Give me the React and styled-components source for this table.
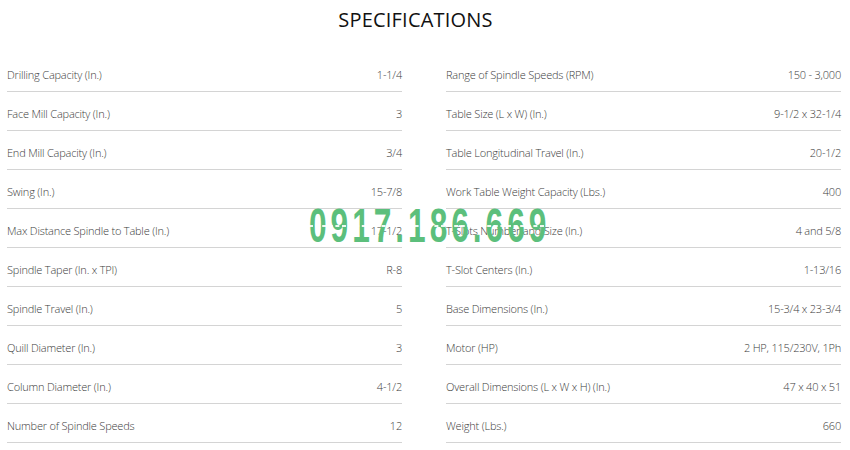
import React from "react";
import styled, { createGlobalStyle } from "styled-components";

const GlobalStyle = createGlobalStyle`
  body {
    margin: 0;
    background: #fff;
    font-family: "Open Sans", "Liberation Sans", sans-serif;
  }
`;

const left = [
  ["Drilling Capacity (In.)", "1-1/4"],
  ["Face Mill Capacity (In.)", "3"],
  ["End Mill Capacity (In.)", "3/4"],
  ["Swing (In.)", "15-7/8"],
  ["Max Distance Spindle to Table (In.)", "17-1/2"],
  ["Spindle Taper (In. x TPI)", "R-8"],
  ["Spindle Travel (In.)", "5"],
  ["Quill Diameter (In.)", "3"],
  ["Column Diameter (In.)", "4-1/2"],
  ["Number of Spindle Speeds", "12"],
];

const right = [
  ["Range of Spindle Speeds (RPM)", "150 - 3,000"],
  ["Table Size (L x W) (In.)", "9-1/2 x 32-1/4"],
  ["Table Longitudinal Travel (In.)", "20-1/2"],
  ["Work Table Weight Capacity (Lbs.)", "400"],
  ["T-Slots Number and Size (In.)", "4 and 5/8"],
  ["T-Slot Centers (In.)", "1-13/16"],
  ["Base Dimensions (In.)", "15-3/4 x 23-3/4"],
  ["Motor (HP)", "2 HP, 115/230V, 1Ph"],
  ["Overall Dimensions (L x W x H) (In.)", "47 x 40 x 51"],
  ["Weight (Lbs.)", "660"],
];

const Page = styled.div`
  position: relative;
  width: 850px;
  height: 450px;
  overflow: hidden;
`;

const Title = styled.h2`
  margin: 0;
  padding: 6px 19px 0 0;
  height: 53px;
  box-sizing: border-box;
  text-align: center;
  font-size: 20px;
  font-weight: 500;
  color: #111;
  letter-spacing: 0.2px;
`;

const Columns = styled.div`
  display: grid;
  grid-template-columns: 395px 395px;
  column-gap: 44px;
  padding-left: 7px;
`;

const Column = styled.div`
  display: flex;
  flex-direction: column;
`;

const Row = styled.div`
  display: flex;
  justify-content: space-between;
  align-items: flex-end;
  height: 39px;
  box-sizing: border-box;
  padding-bottom: 9px;
  border-bottom: 1px solid #d4d4d4;
  font-size: 11px;
  font-weight: 300;
  color: #3c3c3c;
  letter-spacing: -0.2px;
`;

const Watermark = styled.div`
  position: absolute;
  left: 309px;
  top: 202px;
  font-family: "Liberation Sans", sans-serif;
  font-weight: 700;
  font-size: 48px;
  letter-spacing: 6px;
  color: #5cbf7c;
  line-height: 1;
  transform: scaleX(0.66);
  transform-origin: left center;
`;

const Dashes = styled.div`
  position: absolute;
  left: 0;
  right: 0;
  top: 23px;
  border-top: 2px dashed rgba(255, 255, 255, 0.9);
`;

const SpecColumn = ({ items }) => (
  <Column>
    {items.map(([label, value]) => (
      <Row key={label}>
        <span>{label}</span>
        <span>{value}</span>
      </Row>
    ))}
  </Column>
);

export default function App() {
  return (
    <Page>
      <GlobalStyle />
      <Title>SPECIFICATIONS</Title>
      <Columns>
        <SpecColumn items={left} />
        <SpecColumn items={right} />
      </Columns>
      <Watermark>
        0917.186.669
        <Dashes />
      </Watermark>
    </Page>
  );
}
